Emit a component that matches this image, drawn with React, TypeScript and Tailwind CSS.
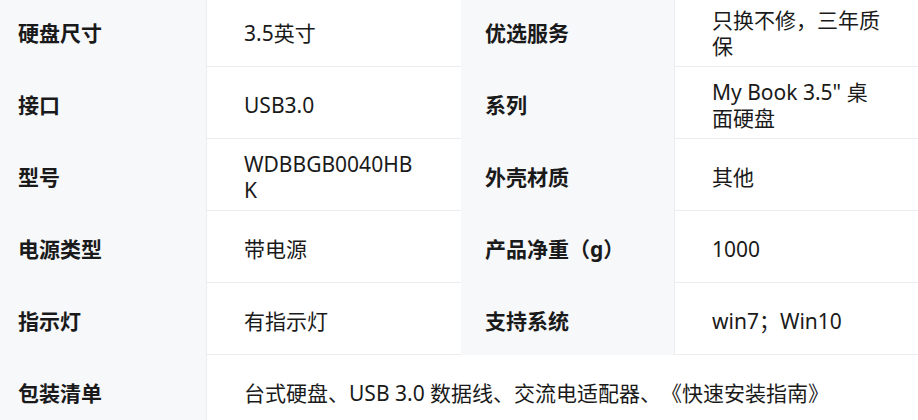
import React from 'react';

const rows: [string, string, string, string][] = [
  ['硬盘尺寸', '3.5英寸', '优选服务', '只换不修，三年质保'],
  ['接口', 'USB3.0', '系列', 'My Book 3.5" 桌面硬盘'],
  ['型号', 'WDBBGB0040HBK', '外壳材质', '其他'],
  ['电源类型', '带电源', '产品净重（g）', '1000'],
  ['指示灯', '有指示灯', '支持系统', 'win7；Win10'],
];

const labelCls = 'flex items-center h-[72px] pt-[4px] bg-[#f7f8fa] font-bold text-[#1a1a1a] border-r border-[#ebedf0]';
const valueCls = 'flex items-center h-[72px] pt-[4px] pl-[37px] text-[#1a1a1a] border-b border-[#ebedf0] break-all';

const App: React.FC = () => {
  return (
    <div
      className="w-[918px] h-[420px] overflow-hidden bg-white text-[21px] leading-[26px] [text-spacing-trim:space-all]"
      style={{ fontFamily: '"Noto Sans", "Noto Sans CJK SC", sans-serif' }}
    >
      <div className="grid grid-cols-[207px_254px_214px_1fr] -mt-[5px]">
        {rows.map(([l1, v1, l2, v2]) => (
          <React.Fragment key={l1}>
            <div className={`${labelCls} pl-[18px]`}>{l1}</div>
            <div className={`${valueCls} pr-[46px]`}>{v1}</div>
            <div className={`${labelCls} pl-[24px]`}>{l2}</div>
            <div className={`${valueCls} pr-[35px]`}>{v2}</div>
          </React.Fragment>
        ))}
        {/* last row spans the rest */}
        <div className={`${labelCls} pl-[18px]`}>包装清单</div>
        <div className={`${valueCls} col-span-3`}>
          台式硬盘、USB 3.0 数据线、交流电适配器、《快速安装指南》
        </div>
      </div>
    </div>
  );
};

export default App;
